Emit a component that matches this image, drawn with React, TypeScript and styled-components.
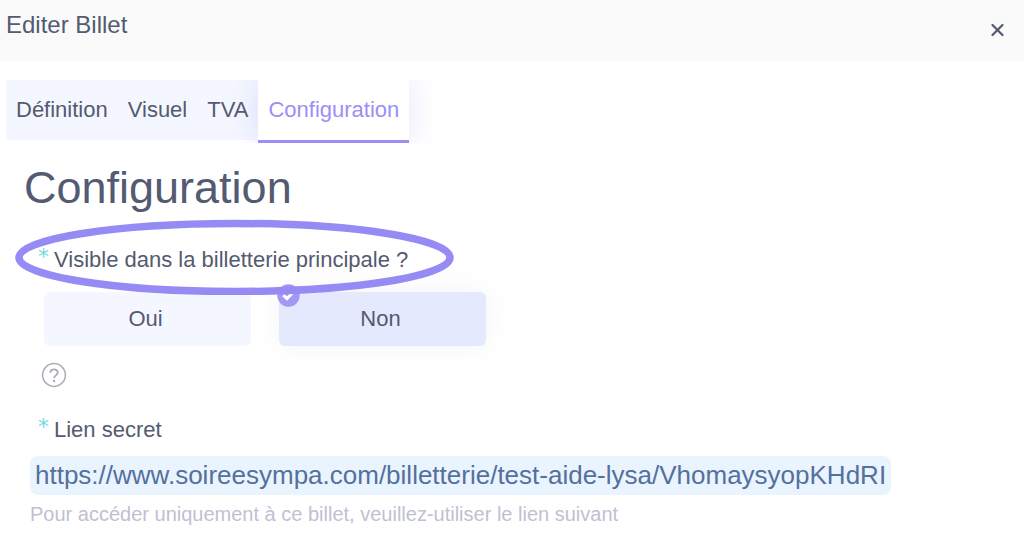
import React, { useState } from "react";
import styled, { createGlobalStyle } from "styled-components";

const GlobalStyle = createGlobalStyle`
  * { box-sizing: border-box; }
  body {
    margin: 0;
    background: #fff;
    color: #545a70;
    font-family: "Liberation Sans", Arial, sans-serif;
    font-size: 22px;
  }
  button { font: inherit; color: inherit; border: 0; background: none; cursor: pointer; }
`;

const Header = styled.header`
  display: flex;
  justify-content: space-between;
  align-items: flex-start;
  height: 62px;
  padding: 10px 16px 0 6px;
  background: #fafafa;
`;

const DialogTitle = styled.h1`
  margin: 0;
  font-size: 24px;
  line-height: 30px;
  font-weight: 400;
`;

const CloseButton = styled.button`
  display: flex;
  padding: 10px 4px;
`;

const Tabs = styled.nav`
  display: flex;
  width: fit-content;
  height: 60px;
  margin: 18px 0 0 6px;
  background: #f4f7ff;
  clip-path: inset(0 -24px -3px 0);
`;

const Tab = styled.button<{ $active?: boolean }>`
  height: ${(p) => (p.$active ? 63 : 60)}px;
  padding: 0 10px;
  line-height: 24px;
  ${(p) =>
    p.$active &&
    `
    color: #998ff5;
    background: #fff;
    border-bottom: 3px solid #998ff5;
    box-shadow: 0 0 30px rgba(90, 90, 220, 0.16);
  `}
`;

const Panel = styled.main`
  padding: 22px 24px 24px;
`;

const PanelTitle = styled.h2`
  margin: 0;
  font-size: 45px;
  line-height: 52px;
  font-weight: 400;
`;

const Choice = styled.fieldset`
  margin: 32px 0 0;
  padding: 0 0 0 20px;
  border: 0;
`;

const Question = styled.legend`
  position: relative;
  margin-left: -6px;
  padding: 0;
  line-height: 28px;
`;

const Required = styled.span`
  display: inline-block;
  width: 16px;
  color: #6fdbe3;
  font-family: "DejaVu Sans", sans-serif;
  font-size: 22px;
  line-height: 16px;
  vertical-align: 3px;
`;

const Highlight = styled.svg`
  position: absolute;
  z-index: 2;
  left: -23px;
  top: -27px;
  pointer-events: none;
`;

const Options = styled.div`
  display: flex;
  gap: 28px;
  padding-top: 18px;
`;

const Option = styled.label<{ $checked: boolean }>`
  position: relative;
  display: flex;
  align-items: center;
  justify-content: center;
  width: 207px;
  height: 54px;
  padding-right: 4px;
  border-radius: 6px;
  cursor: pointer;
  background: ${(p) => (p.$checked ? "#e4e9fd" : "#f4f7ff")};
  box-shadow: ${(p) => (p.$checked ? "0 0 30px rgba(0, 0, 0, 0.05)" : "none")};
`;

const Radio = styled.input`
  position: absolute;
  inset: 0;
  margin: 0;
  opacity: 0;
`;

const CheckBadge = styled.svg`
  position: absolute;
  left: -2px;
  top: -8px;
`;

const HelpButton = styled.button`
  display: flex;
  margin: 16px 0 0 17px;
  padding: 0;
`;

const Caption = styled.div`
  margin: 28px 0 0 14px;
  line-height: 28px;
`;

const SecretLink = styled.a`
  display: block;
  width: fit-content;
  margin: 12px 0 0 6px;
  padding: 0 5px;
  border-radius: 8px;
  background: #e9f4fe;
  color: #54709d;
  font-size: 26px;
  line-height: 39px;
  text-decoration: none;
`;

const Note = styled.p`
  margin: 7px 0 0 6px;
  color: #c0c1d2;
  font-size: 20px;
  line-height: 24px;
`;

const tabs = ["Définition", "Visuel", "TVA", "Configuration"];
const answers = ["Oui", "Non"];
const secretUrl = "https://www.soireesympa.com/billetterie/test-aide-lysa/VhomaysyopKHdRI";

export default function App() {
  const [tab, setTab] = useState("Configuration");
  const [answer, setAnswer] = useState("Non");

  return (
    <>
      <GlobalStyle />
      <Header>
        <DialogTitle>Editer Billet</DialogTitle>
        <CloseButton aria-label="Fermer">
          <svg width="13" height="20" viewBox="0 0 13 20" fill="none" stroke="#545a70" strokeWidth="2.2" strokeLinecap="round">
            <path d="M1.5 5 L11.5 15 M11.5 5 L1.5 15" />
          </svg>
        </CloseButton>
      </Header>

      <Tabs>
        {tabs.map((name) => (
          <Tab key={name} $active={name === tab} onClick={() => setTab(name)}>
            {name}
          </Tab>
        ))}
      </Tabs>

      <Panel>
        <PanelTitle>Configuration</PanelTitle>

        <Choice>
          <Question>
            <Required>*</Required>
            Visible dans la billetterie principale ?
            <Highlight width="440" height="76" viewBox="0 0 440 76" fill="none">
              <ellipse cx="219.5" cy="38.5" rx="215.5" ry="34" stroke="#968bf4" strokeWidth="7.5" />
            </Highlight>
          </Question>
          <Options>
            {answers.map((name) => (
              <Option key={name} $checked={name === answer}>
                <Radio type="radio" name="visible" value={name} checked={name === answer} onChange={() => setAnswer(name)} />
                {name}
                {name === answer && (
                  <CheckBadge width="23" height="23" viewBox="0 0 23 23" fill="none">
                    <circle cx="11.5" cy="11.5" r="11.2" fill="#a298f6" />
                    <path d="M6.3 11.2 L10 14.6 L16.3 8" stroke="#fff" strokeWidth="3" />
                  </CheckBadge>
                )}
              </Option>
            ))}
          </Options>
        </Choice>

        <HelpButton aria-label="Aide">
          <svg width="26" height="26" viewBox="0 0 26 26" fill="none" stroke="#a9abb8">
            <circle cx="13" cy="13" r="11.4" strokeWidth="1.5" />
            <path d="M9.4 10.8 C9.4 6.2 16.8 6.3 16.8 10.6 C16.8 13.3 13.1 13 13.1 16.2" strokeWidth="1.8" />
            <circle cx="13.1" cy="19" r="1.2" fill="#a9abb8" stroke="none" />
          </svg>
        </HelpButton>

        <Caption>
          <Required>*</Required>
          Lien secret
        </Caption>
        <SecretLink href={secretUrl}>{secretUrl}</SecretLink>
        <Note>Pour accéder uniquement à ce billet, veuillez-utiliser le lien suivant</Note>
      </Panel>
    </>
  );
}
